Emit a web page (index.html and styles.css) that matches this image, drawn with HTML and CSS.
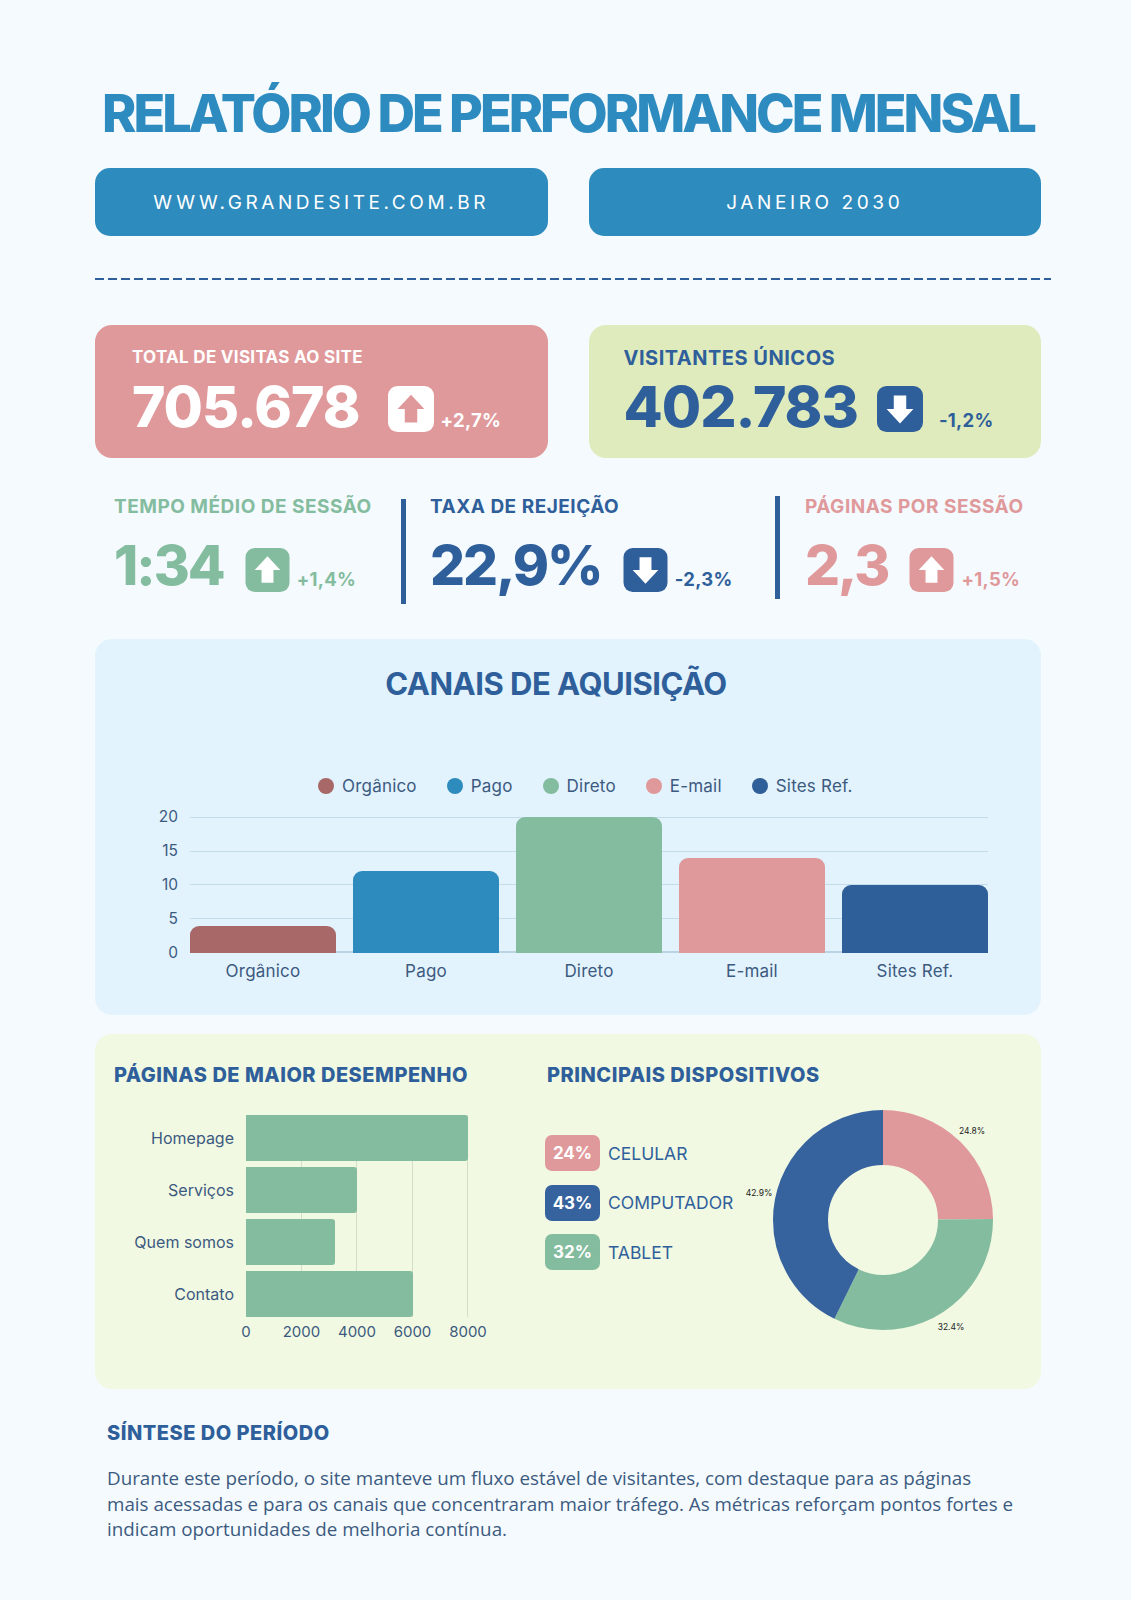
FILE: index.html
```html
<!DOCTYPE html>
<html lang="pt-BR">
<head>
<meta charset="utf-8">
<title>Relatório de Performance Mensal</title>
<link rel="stylesheet" href="styles.css">
</head>
<body>
<main class="page">
  <h1 class="title">RELATÓRIO DE PERFORMANCE MENSAL</h1>

  <div class="pills">
    <div class="pill">WWW.GRANDESITE.COM.BR</div>
    <div class="pill">JANEIRO 2030</div>
  </div>

  <div class="dash"></div>

  <div class="cards">
    <div class="card card-pink">
      <div class="card-label">TOTAL DE VISITAS AO SITE</div>
      <div class="metric">
        <span class="big">705.678</span>
        <svg class="ico ico-card1" viewBox="0 0 48 48"><rect width="48" height="48" rx="10" class="box-white"/><path class="ar-pink" d="M24 9 L38 24 L30.5 24 L30.5 38 L17.5 38 L17.5 24 L10 24 Z"/></svg>
        <span class="pct pct-card1">+2,7%</span>
      </div>
    </div>
    <div class="card card-green">
      <div class="card-label card-label-lg">VISITANTES ÚNICOS</div>
      <div class="metric">
        <span class="big">402.783</span>
        <svg class="ico ico-card2" viewBox="0 0 48 48"><rect width="48" height="48" rx="10" class="box-navy"/><path class="ar-white" d="M24 39 L38 24 L30.5 24 L30.5 10 L17.5 10 L17.5 24 L10 24 Z"/></svg>
        <span class="pct pct-card2">-1,2%</span>
      </div>
    </div>
  </div>

  <div class="stats">
    <div class="stat stat-1">
      <div class="stat-label c-green">TEMPO MÉDIO DE SESSÃO</div>
      <div class="metric">
        <span class="big big-stat c-green">1:34</span>
        <svg class="ico ico-stat" viewBox="0 0 48 48"><rect width="48" height="48" rx="10" class="box-green"/><path class="ar-white" d="M24 9 L38 24 L30.5 24 L30.5 38 L17.5 38 L17.5 24 L10 24 Z"/></svg>
        <span class="pct pct-stat c-green">+1,4%</span>
      </div>
    </div>
    <div class="divider divider-1"></div>
    <div class="stat stat-2">
      <div class="stat-label c-navy">TAXA DE REJEIÇÃO</div>
      <div class="metric">
        <span class="big big-stat c-navy">22,9%</span>
        <svg class="ico ico-stat" viewBox="0 0 48 48"><rect width="48" height="48" rx="10" class="box-navy"/><path class="ar-white" d="M24 39 L38 24 L30.5 24 L30.5 10 L17.5 10 L17.5 24 L10 24 Z"/></svg>
        <span class="pct pct-stat c-navy">-2,3%</span>
      </div>
    </div>
    <div class="divider divider-2"></div>
    <div class="stat stat-3">
      <div class="stat-label c-pink">PÁGINAS POR SESSÃO</div>
      <div class="metric">
        <span class="big big-stat c-pink">2,3</span>
        <svg class="ico ico-stat" viewBox="0 0 48 48"><rect width="48" height="48" rx="10" class="box-pink"/><path class="ar-white" d="M24 9 L38 24 L30.5 24 L30.5 38 L17.5 38 L17.5 24 L10 24 Z"/></svg>
        <span class="pct pct-stat c-pink">+1,5%</span>
      </div>
    </div>
  </div>

  <section class="panel panel-chart">
    <h2 class="chart-title">CANAIS DE AQUISIÇÃO</h2>
    <div class="legend">
      <span class="lg"><i class="dot bg-maroon"></i>Orgânico</span>
      <span class="lg"><i class="dot bg-blue"></i>Pago</span>
      <span class="lg"><i class="dot bg-green"></i>Direto</span>
      <span class="lg"><i class="dot bg-pink"></i>E-mail</span>
      <span class="lg"><i class="dot bg-navy"></i>Sites Ref.</span>
    </div>
    <div class="vchart">
      <div class="yaxis">
        <span>20</span><span>15</span><span>10</span><span>5</span><span>0</span>
      </div>
      <div class="vplot-wrap">
        <div class="vplot">
          <div class="hgrid"><i></i><i></i><i></i><i></i><i class="base"></i></div>
          <div class="vbars">
            <div class="vbar bg-maroon" style="height:20%"></div>
            <div class="vbar bg-blue" style="height:60%"></div>
            <div class="vbar bg-green" style="height:100%"></div>
            <div class="vbar bg-pink" style="height:70%"></div>
            <div class="vbar bg-navy" style="height:50%"></div>
          </div>
        </div>
        <div class="xaxis">
          <span>Orgânico</span><span>Pago</span><span>Direto</span><span>E-mail</span><span>Sites Ref.</span>
        </div>
      </div>
    </div>
  </section>

  <section class="panel panel-bottom">
    <div class="col-left">
      <h3 class="sec-title">PÁGINAS DE MAIOR DESEMPENHO</h3>
      <div class="hchart">
        <div class="hlabels">
          <span>Homepage</span><span>Serviços</span><span>Quem somos</span><span>Contato</span>
        </div>
        <div class="hplot-wrap">
          <div class="hplot">
            <div class="vgrid"><i></i><i></i><i></i><i></i></div>
            <div class="hbars">
              <div class="hbar" style="width:100%"></div>
              <div class="hbar" style="width:50%"></div>
              <div class="hbar" style="width:40%"></div>
              <div class="hbar" style="width:75%"></div>
            </div>
          </div>
          <div class="haxis">
            <span>0</span><span>2000</span><span>4000</span><span>6000</span><span>8000</span>
          </div>
        </div>
      </div>
    </div>
    <div class="col-right">
      <h3 class="sec-title">PRINCIPAIS DISPOSITIVOS</h3>
      <div class="devices">
        <div class="dev-legend">
          <div class="dev"><span class="badge bg-pink">24%</span><span class="dev-name">CELULAR</span></div>
          <div class="dev"><span class="badge bg-navy2">43%</span><span class="dev-name">COMPUTADOR</span></div>
          <div class="dev"><span class="badge bg-green">32%</span><span class="dev-name">TABLET</span></div>
        </div>
        <svg class="donut" width="270" height="240" viewBox="0 0 270 240">
          <g transform="rotate(-90 143 116)">
            <circle cx="143" cy="116" r="82.5" fill="none" stroke="#e0999b" stroke-width="55" stroke-dasharray="128.55 518.36" stroke-dashoffset="0"/>
            <circle cx="143" cy="116" r="82.5" fill="none" stroke="#84bc9f" stroke-width="55" stroke-dasharray="167.95 518.36" stroke-dashoffset="-128.55"/>
            <circle cx="143" cy="116" r="82.5" fill="none" stroke="#36629e" stroke-width="55" stroke-dasharray="221.86 518.36" stroke-dashoffset="-296.5"/>
          </g>
          <text x="232" y="30" class="dl">24.8%</text>
          <text x="19" y="92" class="dl">42.9%</text>
          <text x="211" y="226" class="dl">32.4%</text>
        </svg>
      </div>
    </div>
  </section>

  <section class="summary">
    <h3 class="sec-title sum-title">SÍNTESE DO PERÍODO</h3>
    <p class="sum-text">Durante este período, o site manteve um fluxo estável de visitantes, com destaque para as páginas mais acessadas e para os canais que concentraram maior tráfego. As métricas reforçam pontos fortes e indicam oportunidades de melhoria contínua.</p>
  </section>
</main>
</body>
</html>
```

FILE: styles.css
```css
* { box-sizing: border-box; }

html, body {
  margin: 0;
  padding: 0;
  background: #f4fafd;
}

body {
  font-family: "Inter", "Noto Sans", sans-serif;
  color: #3c5a80;
}

.page {
  width: 1131px;
  min-height: 1600px;
  padding: 84px 90px 0 95px;
}

/* ---------- header ---------- */
.title {
  margin: 0 -20px;
  text-align: center;
  white-space: nowrap;
  font-size: 52px;
  line-height: 60px;
  font-weight: 800;
  letter-spacing: -3px;
  color: #2e8bbf;
}

.pills {
  margin-top: 24px;
  display: grid;
  grid-template-columns: 1fr 1fr;
  gap: 41px;
}

.pill {
  height: 68px;
  border-radius: 15px;
  background: #2e8bbd;
  color: #ffffff;
  display: flex;
  align-items: center;
  justify-content: center;
  font-size: 19px;
  font-weight: 400;
  letter-spacing: 3.6px;
}

.dash {
  margin-top: 42px;
  margin-right: -10px;
  height: 2px;
  background: repeating-linear-gradient(90deg, #2f5f9b 0 9px, transparent 9px 13px);
}

/* ---------- cards ---------- */
.cards {
  margin-top: 45px;
  display: grid;
  grid-template-columns: 1fr 1fr;
  gap: 41px;
}

.card {
  height: 133px;
  border-radius: 17px;
  padding: 22px 0 0 37px;
}

.card-pink { background: #e0999b; color: #ffffff; }
.card-green { background: #dfebbc; color: #2f5f9b; padding-left: 35px; }

.card-label {
  font-size: 17px;
  line-height: 20px;
  font-weight: 700;
  letter-spacing: 0.3px;
}

.card-label-lg {
  font-size: 20px;
  line-height: 22px;
  letter-spacing: 0.5px;
}

.metric {
  display: flex;
  align-items: flex-start;
}

.card .metric { margin-top: 11px; }
.card-green .metric { margin-top: 9px; }

.big {
  font-size: 57px;
  line-height: 57px;
  font-weight: 800;
  letter-spacing: -1px;
}

.big-stat {
  font-size: 55px;
  letter-spacing: -2px;
}

.ico { display: block; flex: none; }

.ico-card1 { width: 46px; height: 46px; margin-top: 8px; margin-left: 28px; }
.ico-card2 { width: 46px; height: 46px; margin-top: 8px; margin-left: 19px; }

.pct {
  font-size: 18.5px;
  line-height: 20px;
  font-weight: 700;
  letter-spacing: 0.3px;
  margin-top: 32px;
}
.pct-card1 { margin-left: 7px; }
.pct-card2 { margin-left: 16px; }

.box-white { fill: #ffffff; }
.box-navy { fill: #2f5f9b; }
.box-green { fill: #84bc9f; }
.box-pink { fill: #e0999b; }
.ar-pink { fill: #e0999b; }
.ar-white { fill: #ffffff; }

/* ---------- stats row ---------- */
.stats {
  margin-top: 38px;
  display: flex;
  align-items: flex-start;
}

.stat-1 { width: 306px; padding-left: 19px; }
.stat-2 { width: 369px; padding-left: 24px; }
.stat-3 { flex: 1; padding-left: 25px; }

.stat-label {
  font-size: 19px;
  line-height: 22px;
  font-weight: 700;
  letter-spacing: 0.5px;
  white-space: nowrap;
}

.stat .metric { margin-top: 19px; }

.ico-stat { width: 45px; height: 44px; margin-top: 11px; margin-left: 21px; }
.pct-stat { margin-left: 7px; }

.divider {
  width: 5px;
  background: #2f5f9b;
  flex: none;
}
.divider-1 { height: 105px; margin-top: 3px; }
.divider-2 { height: 103px; margin-top: 0; }

.c-green { color: #84bc9f; }
.c-navy { color: #2f5f9b; }
.c-pink { color: #e0999b; }

/* ---------- panels ---------- */
.panel {
  border-radius: 17px;
}

.panel-chart {
  margin-top: 35px;
  height: 376px;
  background: #e2f3fd;
  padding-top: 26px;
}

.chart-title {
  margin: 0;
  text-align: center;
  padding-right: 24px;
  font-size: 31px;
  line-height: 38px;
  font-weight: 700;
  letter-spacing: -0.5px;
  color: #2f5f9b;
}

.legend {
  margin-top: 73px;
  margin-left: 223px;
  display: flex;
  gap: 30px;
  height: 20px;
  align-items: center;
  font-size: 17px;
  letter-spacing: 0.2px;
  color: #3c5a80;
}

.lg { display: flex; align-items: center; gap: 8px; }

.dot {
  display: block;
  width: 16px;
  height: 16px;
  border-radius: 50%;
}

.bg-maroon { background: #a86868; }
.bg-blue { background: #2e8bbd; }
.bg-green { background: #84bc9f; }
.bg-pink { background: #e0999b; }
.bg-navy { background: #2f5f98; }
.bg-navy2 { background: #36629e; }

.vchart {
  margin-top: 21px;
  display: flex;
  padding-left: 55px;
}

.yaxis {
  width: 28px;
  height: 152px;
  margin-top: -8px;
  display: flex;
  flex-direction: column;
  justify-content: space-between;
  align-items: flex-end;
  font-size: 15.5px;
  line-height: 16px;
  color: #3c5a80;
}

.vplot-wrap { margin-left: 12px; width: 798px; }

.vplot {
  position: relative;
  height: 136px;
}

.hgrid {
  position: absolute;
  inset: 0;
  display: flex;
  flex-direction: column;
  justify-content: space-between;
}
.hgrid i {
  display: block;
  height: 1px;
  background: #c4dbea;
}
.hgrid i.base { height: 2px; background: #bcd3e4; }

.vbars {
  position: relative;
  height: 100%;
  display: flex;
  align-items: flex-end;
  gap: 17px;
}

.vbar {
  flex: 1;
  border-radius: 9px 9px 0 0;
}

.xaxis {
  margin-top: 8px;
  display: flex;
  gap: 17px;
  font-size: 17px;
  letter-spacing: 0.2px;
  line-height: 20px;
  color: #3c5a80;
}
.xaxis span { flex: 1; text-align: center; }

/* ---------- bottom panel ---------- */
.panel-bottom {
  margin-top: 19px;
  height: 355px;
  background: #f1f9e2;
  padding: 28px 0 0 19px;
  display: grid;
  grid-template-columns: 433px 1fr;
}

.sec-title {
  margin: 0;
  font-size: 20px;
  line-height: 26px;
  font-weight: 800;
  letter-spacing: 0.5px;
  color: #2f5f9b;
  white-space: nowrap;
}

.hchart {
  margin-top: 27px;
  display: flex;
}

.hlabels {
  width: 120px;
  display: flex;
  flex-direction: column;
  gap: 6px;
  align-items: flex-end;
  font-size: 16px;
  color: #3c5a80;
}
.hlabels span { height: 46px; line-height: 46px; }

.hplot-wrap { margin-left: 12px; width: 222px; }

.hplot { position: relative; }

.vgrid {
  position: absolute;
  inset: 0;
  display: flex;
  justify-content: flex-start;
  gap: 54.5px;
  padding-left: 55px;
}
.vgrid i { display: block; width: 1px; background: #d6decb; height: 100%; }

.hbars {
  position: relative;
  display: flex;
  flex-direction: column;
  gap: 6px;
}

.hbar {
  height: 46px;
  background: #84bc9f;
  border-radius: 0 3px 3px 0;
}

.haxis {
  margin-top: 7px;
  margin-left: -27.75px;
  width: 277.5px;
  display: grid;
  grid-template-columns: repeat(5, 1fr);
  text-align: center;
  font-size: 15px;
  line-height: 16px;
  color: #3c5a80;
}

.devices {
  margin-top: 16px;
  display: flex;
  margin-left: -2px;
}

.dev-legend {
  width: 195px;
  padding-top: 31px;
  display: flex;
  flex-direction: column;
  gap: 13.5px;
}

.dev { display: flex; align-items: center; }

.badge {
  width: 55px;
  height: 36px;
  border-radius: 7px;
  color: #ffffff;
  font-size: 17px;
  font-weight: 700;
  display: flex;
  align-items: center;
  justify-content: center;
}

.dev-name {
  margin-left: 8px;
  font-size: 17.5px;
  color: #2f5f9b;
  white-space: nowrap;
}

.donut { display: block; flex: none; }

.dl {
  font-family: "Inter", sans-serif;
  font-size: 8.5px;
  fill: #222222;
  text-anchor: middle;
}

/* ---------- summary ---------- */
.summary {
  padding: 0 25px 0 12px;
}

.sum-title {
  margin-top: 31px;
}

.sum-text {
  margin: 20px 0 0;
  font-family: "Open Sans", "Noto Sans", sans-serif;
  font-size: 18.8px;
  line-height: 25.5px;
  color: #3c5a80;
}
```
